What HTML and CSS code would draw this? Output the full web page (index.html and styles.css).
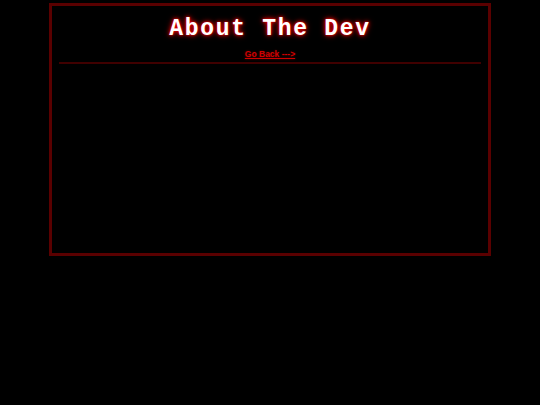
FILE: index.html
```html
<!DOCTYPE html>
<html>
<head>
<meta charset="utf-8">
<link rel="stylesheet" href="styles.css">
</head>
<body>
<div class="box">
  <h1 class="title">About The Dev</h1>
  <a class="back" href="#">Go Back ---&gt;</a>
  <hr class="rule">
</div>
</body>
</html>
```
FILE: styles.css
```css
html, body { background: #000; }
body { margin: 0; }
.box {
  width: 442px;
  height: 253px;
  margin: 3px auto 0;
  border: 3px solid #5a0000;
  padding: 0 7px;
  box-sizing: border-box;
  text-align: center;
}
.title {
  margin: 12px 0 0;
  font-family: "Liberation Mono", "Courier New", monospace;
  font-weight: bold;
  font-size: 23px;
  line-height: 23px;
  letter-spacing: 1.7px;
  color: #fff;
  text-shadow: 0 0 2px #ff0000, 0 0 4px #e00000, 0 0 6px #a00000;
}
.back {
  display: inline-block;
  margin-top: 9px;
  font-family: "Liberation Sans", Arial, sans-serif;
  font-weight: bold;
  font-size: 8.5px;
  line-height: 9px;
  color: #d00000;
  text-decoration: underline;
  text-shadow: 0 0 2px #600000;
}
.rule {
  margin: 1px 0 0;
  border: 0;
  height: 2px;
  background: #400000;
}
```
